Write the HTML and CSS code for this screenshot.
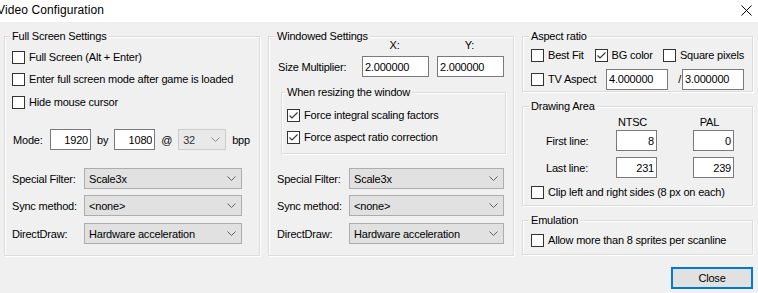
FILE: index.html
```html
<!DOCTYPE html>
<html lang="en">
<head>
  <meta charset="UTF-8">
  <title>Video Configuration</title>
  <link rel="stylesheet" href="styles.css">
</head>
<body>

  <div class="titlebar">
    <span class="title">Video Configuration</span>
    <svg class="close-x" width="11" height="11" viewBox="0 0 11 11">
      <path d="M0.5 0.5L10.5 10.5M10.5 0.5L0.5 10.5" stroke="#000" stroke-width="1" fill="none"/>
    </svg>
  </div>

  <div class="content">

    <!-- left column -->
    <div class="group g-full">
      <div class="legend"><span>Full Screen Settings</span></div>
      <div class="check fs-1"><span class="box"></span>Full Screen (Alt + Enter)</div>
      <div class="check"><span class="box"></span>Enter full screen mode after game is loaded</div>
      <div class="check fs-3"><span class="box"></span>Hide mouse cursor</div>

      <div class="mode-row">
        <span class="mode-label">Mode:</span>
        <input class="edit num w41" type="text" value="1920">
        <span>by</span>
        <input class="edit num w41" type="text" value="1080">
        <span>@</span>
        <div class="select disabled w48"><span>32</span><svg class="chev" width="9" height="5" viewBox="0 0 9 5"><path d="M0.5 0.5L4.5 4.5L8.5 0.5" stroke="#8a8a8a" fill="none"/></svg></div>
        <span>bpp</span>
      </div>

      <div class="sel-row first-sel">
        <span class="sel-label">Special Filter:</span>
        <div class="select w158"><span>Scale3x</span><svg class="chev" width="9" height="5" viewBox="0 0 9 5"><path d="M0.5 0.5L4.5 4.5L8.5 0.5" stroke="#606060" fill="none"/></svg></div>
      </div>
      <div class="sel-row second-sel">
        <span class="sel-label">Sync method:</span>
        <div class="select w158"><span>&lt;none&gt;</span><svg class="chev" width="9" height="5" viewBox="0 0 9 5"><path d="M0.5 0.5L4.5 4.5L8.5 0.5" stroke="#606060" fill="none"/></svg></div>
      </div>
      <div class="sel-row third-sel">
        <span class="sel-label">DirectDraw:</span>
        <div class="select w158"><span>Hardware acceleration</span><svg class="chev" width="9" height="5" viewBox="0 0 9 5"><path d="M0.5 0.5L4.5 4.5L8.5 0.5" stroke="#606060" fill="none"/></svg></div>
      </div>
    </div>

    <!-- middle column -->
    <div class="group g-win">
      <div class="legend"><span>Windowed Settings</span></div>
      <div class="xy-row">
        <span class="xy-spacer"></span>
        <span class="xy">X:</span>
        <span class="xy">Y:</span>
      </div>
      <div class="size-row">
        <span class="size-label">Size Multiplier:</span>
        <input class="edit w67" type="text" value="2.000000">
        <input class="edit w67" type="text" value="2.000000">
      </div>

      <div class="group g-resize">
        <div class="legend"><span>When resizing the window</span></div>
        <div class="check rs-1"><span class="box checked"><svg width="11" height="11" viewBox="0 0 11 11"><path d="M1.5 5.5L4 8L9.5 2.5" stroke="#333" stroke-width="1.1" fill="none"/></svg></span>Force integral scaling factors</div>
        <div class="check"><span class="box checked"><svg width="11" height="11" viewBox="0 0 11 11"><path d="M1.5 5.5L4 8L9.5 2.5" stroke="#333" stroke-width="1.1" fill="none"/></svg></span>Force aspect ratio correction</div>
      </div>

      <div class="sel-row win-sel">
        <span class="sel-label">Special Filter:</span>
        <div class="select w155"><span>Scale3x</span><svg class="chev" width="9" height="5" viewBox="0 0 9 5"><path d="M0.5 0.5L4.5 4.5L8.5 0.5" stroke="#606060" fill="none"/></svg></div>
      </div>
      <div class="sel-row second-sel">
        <span class="sel-label">Sync method:</span>
        <div class="select w155"><span>&lt;none&gt;</span><svg class="chev" width="9" height="5" viewBox="0 0 9 5"><path d="M0.5 0.5L4.5 4.5L8.5 0.5" stroke="#606060" fill="none"/></svg></div>
      </div>
      <div class="sel-row third-sel">
        <span class="sel-label">DirectDraw:</span>
        <div class="select w155"><span>Hardware acceleration</span><svg class="chev" width="9" height="5" viewBox="0 0 9 5"><path d="M0.5 0.5L4.5 4.5L8.5 0.5" stroke="#606060" fill="none"/></svg></div>
      </div>
    </div>

    <!-- right column -->
    <div class="col-right">
      <div class="group g-aspect">
        <div class="legend"><span>Aspect ratio</span></div>
        <div class="aspect-row ar-1">
          <div class="check item-bestfit"><span class="box"></span>Best Fit</div>
          <div class="check item-bg"><span class="box checked"><svg width="11" height="11" viewBox="0 0 11 11"><path d="M1.5 5.5L4 8L9.5 2.5" stroke="#333" stroke-width="1.1" fill="none"/></svg></span>BG color</div>
          <div class="check"><span class="box"></span>Square pixels</div>
        </div>
        <div class="aspect-row ar-2">
          <div class="check item-tv"><span class="box"></span>TV Aspect</div>
          <input class="edit w62" type="text" value="4.000000">
          <span class="slash">/</span>
          <input class="edit w62" type="text" value="3.000000">
        </div>
      </div>

      <div class="group g-draw">
        <div class="legend"><span>Drawing Area</span></div>
        <div class="head-row">
          <span class="head-spacer"></span>
          <span class="head">NTSC</span>
          <span class="head head-pal">PAL</span>
        </div>
        <div class="line-row lr-1">
          <span class="line-label">First line:</span>
          <input class="edit num w41" type="text" value="8">
          <input class="edit num w41 pal" type="text" value="0">
        </div>
        <div class="line-row lr-2">
          <span class="line-label">Last line:</span>
          <input class="edit num w41" type="text" value="231">
          <input class="edit num w41 pal" type="text" value="239">
        </div>
        <div class="check clip-row"><span class="box"></span>Clip left and right sides (8 px on each)</div>
      </div>

      <div class="group g-emu">
        <div class="legend"><span>Emulation</span></div>
        <div class="check emu-row"><span class="box"></span>Allow more than 8 sprites per scanline</div>
      </div>

      <button class="close-btn">Close</button>
    </div>

  </div>

</body>
</html>
```

FILE: styles.css
```css
body {
  margin: 0;
  width: 758px;
  height: 293px;
  overflow: hidden;
  background-color: #f0f0f0;
  font-family: "Liberation Sans", Arial, sans-serif;
  font-size: 11px;
  letter-spacing: -0.2px;
  color: #000;
}

.titlebar {
  height: 22px;
  background: #fff;
  display: flex;
  align-items: flex-start;
  justify-content: space-between;
}

.title {
  font-size: 12px;
  line-height: 14px;
  letter-spacing: 0.1px;
  margin: 3px 0 0 -3px;
}

.close-x {
  margin: 5px 6px 0 0;
}

.content {
  display: flex;
  align-items: flex-start;
  gap: 8px;
  padding: 14px 0 0 4px;
}

/* group boxes */
.group {
  border: 1px solid #dcdcdc;
  box-shadow: inset 1px 1px 0 #fff, 1px 1px 0 #fff;
  box-sizing: border-box;
}

.legend {
  height: 14px;
  line-height: 14px;
  margin-top: -8px;
  white-space: nowrap;
}

.legend span {
  background: #f0f0f0;
  padding: 0 2px;
  margin-left: -2px;
}

.g-full {
  width: 256px;
  height: 220px;
  padding: 0 7px;
}

.g-win {
  width: 246px;
  height: 220px;
  padding: 0 8px;
}

.g-resize {
  width: 225px;
  height: 62px;
  margin: 15px 0 0 4px;
  padding: 0 5px;
}

.col-right {
  width: 231px;
  display: flex;
  flex-direction: column;
}

.g-aspect {
  height: 56px;
  padding: 0 8px;
}

.g-draw {
  height: 100px;
  margin-top: 14px;
  padding: 0 8px;
}

.g-emu {
  height: 35px;
  margin-top: 14px;
  padding: 0 8px;
}

/* checkboxes */
.check {
  display: flex;
  align-items: center;
  height: 22px;
  white-space: nowrap;
}

.box {
  width: 13px;
  height: 13px;
  border: 1px solid #333;
  background: #fff;
  box-sizing: border-box;
  margin-right: 4px;
  flex: none;
  display: flex;
}

.fs-1 { margin-top: 3px; }
.fs-3 { margin-top: 1px; }
.rs-1 { margin-top: 5px; }

/* edit boxes */
.edit {
  height: 21px;
  box-sizing: border-box;
  border: 1px solid #7a7a7a;
  background: #fff;
  font: inherit;
  letter-spacing: inherit;
  color: #000;
  padding: 0 2px;
  margin: 0;
  flex: none;
}

.num { text-align: right; }
.w41 { width: 41px; }
.w62 { width: 62px; }
.w67 { width: 67px; }

/* combo boxes */
.select {
  display: flex;
  align-items: center;
  justify-content: space-between;
  height: 21px;
  box-sizing: border-box;
  border: 1px solid #adadad;
  background: #e1e1e1;
  padding: 0 5px 0 4px;
  flex: none;
}

.select.disabled {
  border-color: #cccccc;
  background: #e9e9e9;
  color: #333;
}

.w48 { width: 48px; }
.w155 { width: 155px; }
.w158 { width: 158px; }

/* left column rows */
.mode-row {
  display: flex;
  align-items: center;
  gap: 6px;
  height: 21px;
  margin-top: 16px;
}

.mode-label {
  width: 31px;
  margin-left: 1px;
}

.sel-row {
  display: flex;
  align-items: center;
  height: 21px;
}

.sel-label {
  width: 72px;
  flex: none;
}

.first-sel { margin-top: 18px; }
.second-sel { margin-top: 6px; }
.third-sel { margin-top: 7px; }
.win-sel { margin-top: 14px; }

/* middle column rows */
.xy-row {
  display: flex;
  height: 12px;
  line-height: 12px;
  margin-top: -4px;
}

.xy-spacer {
  width: 84px;
}

.xy {
  width: 67px;
  text-align: center;
}

.xy + .xy {
  margin-left: 8px;
}

.size-row {
  display: flex;
  align-items: center;
  height: 21px;
  margin-top: 5px;
}

.size-label {
  width: 84px;
  margin-left: 1px;
}

.size-row .edit + .edit {
  margin-left: 8px;
}

/* right column rows */
.aspect-row {
  display: flex;
  align-items: center;
  height: 22px;
}

.ar-1 { margin-top: 1px; }
.ar-2 { margin-top: 2px; }

.item-bestfit { width: 66px; }
.item-bg { width: 71px; }
.item-tv { width: 75px; }

.slash {
  width: 14px;
  text-align: right;
  padding-right: 1px;
  box-sizing: border-box;
}

.head-row {
  display: flex;
  height: 12px;
  line-height: 12px;
  margin-top: 3px;
}

.head-spacer {
  width: 81px;
}

.head {
  width: 41px;
  text-align: center;
}

.head-pal {
  margin-left: 36px;
}

.line-row {
  display: flex;
  align-items: center;
  height: 21px;
}

.lr-1 { margin-top: 2px; }
.lr-2 { margin-top: 6px; }

.line-label {
  width: 70px;
  padding-left: 15px;
}

.pal {
  margin-left: 36px;
}

.clip-row { margin-top: 3px; }
.emu-row { margin-top: 2px; }

.close-btn {
  align-self: flex-end;
  width: 82px;
  height: 22px;
  margin-top: 12px;
  border: 2px solid #0078d7;
  background: #e1e1e1;
  font: inherit;
  letter-spacing: inherit;
  color: #000;
  padding: 0;
}
```
